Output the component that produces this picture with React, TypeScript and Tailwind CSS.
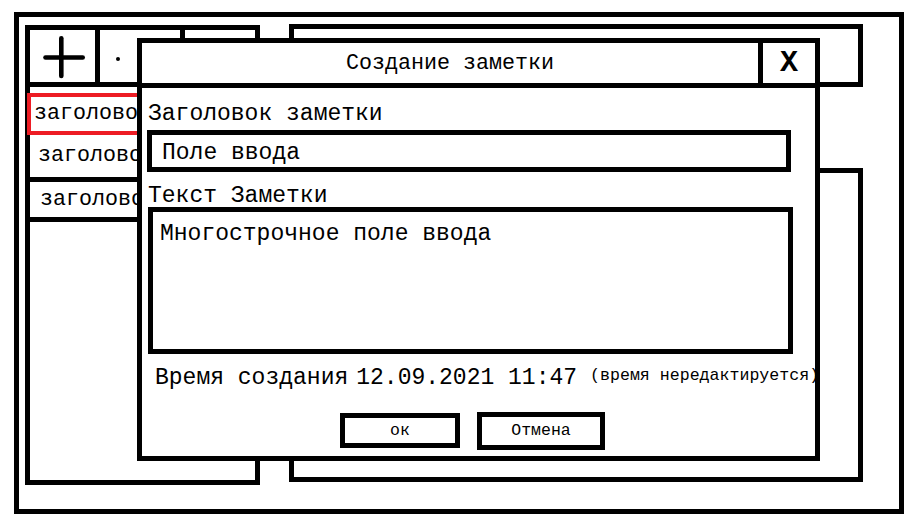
import React from 'react';

const mono = "font-['Liberation_Mono','Noto_Sans_Mono',monospace]";

const PlusIcon: React.FC = () => (
  <svg width="65" height="52" viewBox="0 0 65 52" fill="none">
    <line x1="15.5" y1="27.5" x2="52.7" y2="27.5" stroke="black" strokeWidth="4.6" strokeLinecap="round" />
    <line x1="31.3" y1="8.2" x2="31.3" y2="46" stroke="black" strokeWidth="4.6" strokeLinecap="round" />
  </svg>
);

const LeftPanel: React.FC = () => (
  <div className="mt-[1px] w-[235px] h-[460px] shrink-0 border-[5px] border-black flex flex-col">
    {/* toolbar */}
    <div className="flex h-[57px] border-b-[5px] border-black">
      <div className="w-[70px] border-r-[5px] border-black">
        <PlusIcon />
      </div>
      <div className="w-[85px] border-r-[5px] border-black flex items-center pl-[16px] pt-[6px]">
        <span className="w-[4px] h-[4px] rounded-full bg-black" />
      </div>
      <div className="flex-1" />
    </div>

    {/* notes list */}
    <div className={`mt-[6px] flex flex-col text-[21.7px] text-black ${mono}`}>
      <div className="-ml-[3px] h-[42px] border-[4px] border-[#ed1c24] pl-[3px] leading-[34px] whitespace-nowrap overflow-hidden">
        заголовок
      </div>
      <div className="h-[47px] border-b-[5px] border-black pl-[8px] leading-[42px] whitespace-nowrap overflow-hidden">
        заголовок
      </div>
      <div className="h-[40px] border-b-[5px] border-black pl-[10px] leading-[35px] whitespace-nowrap overflow-hidden">
        заголовок
      </div>
    </div>
  </div>
);

const NoteDialog: React.FC = () => (
  <div className={`absolute left-[137px] top-[38px] w-[683px] h-[423px] bg-white border-[5px] border-black flex flex-col overflow-hidden text-black ${mono}`}>
    <div className="flex h-[45px] shrink-0 border-b-[5px] border-black">
      <div className="flex-1 text-center text-[21.7px] leading-[40px] pt-[1px]">Создание заметки</div>
      <div className="w-[57px] border-l-[5px] border-black flex items-center justify-center text-[30px] font-bold leading-none">
        X
      </div>
    </div>

    <div className="flex flex-col px-[6px]">
      <div className="mt-[15px] text-[23px] leading-[22px]">Заголовок заметки</div>
      <div className="mt-[5px] -ml-[1px] w-[644px] h-[42px] border-[5px] border-black pl-[10px] pt-[4px] text-[23px] leading-[28px]">
        Поле ввода
      </div>

      <div className="mt-[13px] text-[23px] leading-[22px]">Текст Заметки</div>
      <div className="w-[645px] h-[147px] border-[5px] border-black pl-[7px] pt-[7px] text-[23px] leading-[30px]">
        Многострочное поле ввода
      </div>

      <div className="mt-[9px] ml-[7px] flex items-start whitespace-nowrap">
        <span className="text-[23px] leading-[30px]">Время создания</span>
        <span className="ml-[8px] text-[23px] leading-[30px]">12.09.2021 11:47</span>
        <span className="ml-[13px] text-[16.6px] leading-[25px]">(время нередактируется)</span>
      </div>

      <div className="mt-[19px] ml-[192px] flex items-start">
        <button className="mt-[1px] w-[120px] h-[35px] border-[5px] border-black text-[16.5px] leading-[25px] text-center">
          ок
        </button>
        <button className="ml-[17px] w-[128px] h-[38px] border-[5px] border-black text-[16.5px] leading-[28px] text-center">
          Отмена
        </button>
      </div>
    </div>
  </div>
);

const App: React.FC = () => {
  return (
    <div className="relative w-[920px] h-[529px] bg-white pt-[12px] pl-[14px] overflow-hidden">
      <div className="w-[890px] h-[502px] border-[5px] border-black flex items-start pl-[6px] pt-[7px] gap-[29px]">
        <LeftPanel />
        <div className="w-[574px] flex flex-col">
          <div className="h-[63px] border-[5px] border-black" />
          <div className="mt-[81px] h-[314px] border-[5px] border-black" />
        </div>
      </div>
      <NoteDialog />
    </div>
  );
};

export default App;
